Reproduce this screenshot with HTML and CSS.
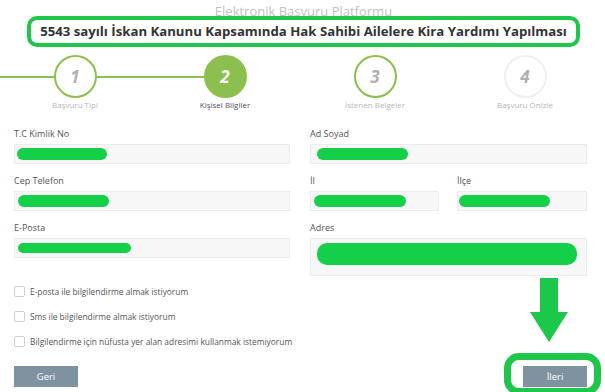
FILE: index.html
```html
<!DOCTYPE html>
<html lang="tr">
<head>
<meta charset="utf-8">
<title>Kira Yardımı Başvurusu</title>
<link rel="stylesheet" href="styles.css">
</head>
<body>
<div class="page">
  <header class="head">
    <div class="platform">Elektronik Başvuru Platformu</div>
    <div class="callout">5543 sayılı İskan Kanunu Kapsamında Hak Sahibi Ailelere Kira Yardımı Yapılması</div>
  </header>

  <ol class="steps">
    <li class="step done"><span class="circle">1</span><span class="step-label">Başvuru Tipi</span></li>
    <li class="step active"><span class="circle">2</span><span class="step-label">Kişisel Bilgiler</span></li>
    <li class="step next"><span class="circle">3</span><span class="step-label">İstenen Belgeler</span></li>
    <li class="step todo"><span class="circle">4</span><span class="step-label">Başvuru Önizle</span></li>
  </ol>

  <form class="form">
    <div class="grid">
      <div class="col">
        <div class="field">
          <label class="label">T.C Kimlik No</label>
          <div class="input pad-3"><span class="redact w90"></span></div>
        </div>
        <div class="field">
          <label class="label">Cep Telefon</label>
          <div class="input pad-4"><span class="redact w91"></span></div>
        </div>
        <div class="field">
          <label class="label">E-Posta</label>
          <div class="input pad-4"><span class="redact w113 thin"></span></div>
        </div>
      </div>
      <div class="col">
        <div class="field">
          <label class="label">Ad Soyad</label>
          <div class="input pad-7"><span class="redact w91"></span></div>
        </div>
        <div class="pair">
          <div class="field">
            <label class="label">İl</label>
            <div class="input pad-4"><span class="redact w92"></span></div>
          </div>
          <div class="field">
            <label class="label">İlçe</label>
            <div class="input pad-1"><span class="redact w91"></span></div>
          </div>
        </div>
        <div class="field">
          <label class="label">Adres</label>
          <div class="input textarea pad-7"><span class="redact w260 tall"></span></div>
        </div>
      </div>
    </div>

    <div class="checks">
      <label class="check"><span class="box"></span>E-posta ile bilgilendirme almak istiyorum</label>
      <label class="check"><span class="box"></span>Sms ile bilgilendirme almak istiyorum</label>
      <label class="check"><span class="box"></span>Bilgilendirme için nüfusta yer alan adresimi kullanmak istemiyorum</label>
    </div>

    <div class="actions">
      <button type="button" class="btn">Geri</button>
      <button type="button" class="btn">İleri</button>
    </div>
  </form>

  <svg class="arrow" width="42" height="66" viewBox="0 0 42 66">
    <path d="M12 0 H30 V34 H40 L21 64 L2 34 H12 Z" fill="#1cc84a"/>
  </svg>
  <div class="ring"></div>
</div>
</body>
</html>
```

FILE: styles.css
```css
* { box-sizing: border-box; }
html, body { margin: 0; padding: 0; }
body {
  width: 605px;
  height: 392px;
  overflow: hidden;
  background: #fff;
  font-family: "Open Sans", "DejaVu Sans", sans-serif;
  color: #444;
}
.page {
  position: relative;
  width: 605px;
  height: 392px;
}

/* header */
.head {
  height: 55px;
  padding-top: 2px;
  text-align: center;
}
.platform {
  font-size: 13px;
  line-height: 18px;
  color: #c2c2c2;
  padding-left: 2px;
}
.callout {
  position: absolute;
  left: 27px;
  top: 16px;
  width: 553px;
  height: 31px;
  border: 4px solid #1ec64a;
  border-radius: 10px;
  background: #fff;
  font-size: 13.2px;
  font-weight: 700;
  color: #333;
  line-height: 23px;
  text-align: center;
  white-space: nowrap;
}

/* steps */
.steps {
  list-style: none;
  margin: 0;
  padding: 0;
  display: grid;
  grid-template-columns: repeat(4, 150px);
  background: linear-gradient(#8cc04e, #8cc04e) no-repeat 0 21px / 225px 2px;
}
.step {
  display: flex;
  flex-direction: column;
  align-items: center;
}
.circle {
  width: 43px;
  height: 43px;
  border-radius: 50%;
  border: 2px solid #8cc04e;
  background: #fff;
  display: flex;
  align-items: center;
  justify-content: center;
  font-size: 17px;
  font-weight: 700;
  font-style: italic;
  color: #b0b0b0;
}
.step.active .circle {
  background: #8cc04e;
  color: #fff;
}
.step.todo .circle {
  border-color: #f0f0f0;
  color: #b0b0b0;
}
.step-label {
  margin-top: 2px;
  font-size: 8px;
  line-height: 10px;
  color: #b8b8b8;
  white-space: nowrap;
}
.step.active .step-label { color: #555; }

/* form */
.form {
  margin-top: 17px;
  padding: 0 18px 0 14px;
}
.grid {
  display: grid;
  grid-template-columns: 276px 277px;
  column-gap: 20px;
  align-items: start;
}
.field { margin-bottom: 10px; }
.col > .field:last-child { margin-bottom: 0; }
.pair {
  display: grid;
  grid-template-columns: 129px 130px;
  column-gap: 18px;
}
.label {
  display: block;
  font-size: 9px;
  line-height: 13px;
  color: #555;
  margin-bottom: 4px;
}
.input {
  height: 20px;
  background: #f7f7f7;
  border: 1px solid #ececec;
  display: flex;
  align-items: center;
}
.input.textarea {
  height: 38px;
  align-items: flex-start;
  padding-top: 4px;
}
.pad-1 { padding-left: 1px; }
.pad-3 { padding-left: 2px; }
.pad-4 { padding-left: 3px; }
.pad-7 { padding-left: 6px; }
.redact {
  display: block;
  height: 12px;
  border-radius: 6px;
  background: #14d049;
}
.redact.thin { height: 10px; border-radius: 5px; }
.redact.tall { height: 22px; border-radius: 10px; }
.w90 { width: 90px; }
.w91 { width: 91px; }
.w92 { width: 92px; }
.w113 { width: 113px; }
.w260 { width: 260px; }

/* checkboxes */
.checks {
  margin-top: 8px;
  display: flex;
  flex-direction: column;
  gap: 11px;
}
.check {
  display: flex;
  align-items: center;
  height: 14px;
  font-size: 8.4px;
  color: #555;
}
.box {
  width: 11px;
  height: 11px;
  border: 1px solid #cfcfcf;
  border-radius: 2px;
  background: #fff;
  margin-right: 5px;
}

/* buttons */
.actions {
  margin-top: 18px;
  display: flex;
  justify-content: space-between;
}
.btn {
  width: 64px;
  height: 21px;
  border: 0;
  border-radius: 0;
  background: #7e939f;
  color: #fff;
  font-family: inherit;
  font-size: 9.5px;
  padding: 0;
}

/* annotations */
.arrow {
  position: absolute;
  left: 528px;
  top: 278px;
}
.ring {
  position: absolute;
  left: 504px;
  top: 353px;
  width: 97px;
  height: 42px;
  border: 7px solid #1ec64a;
  border-radius: 15px;
}
```
